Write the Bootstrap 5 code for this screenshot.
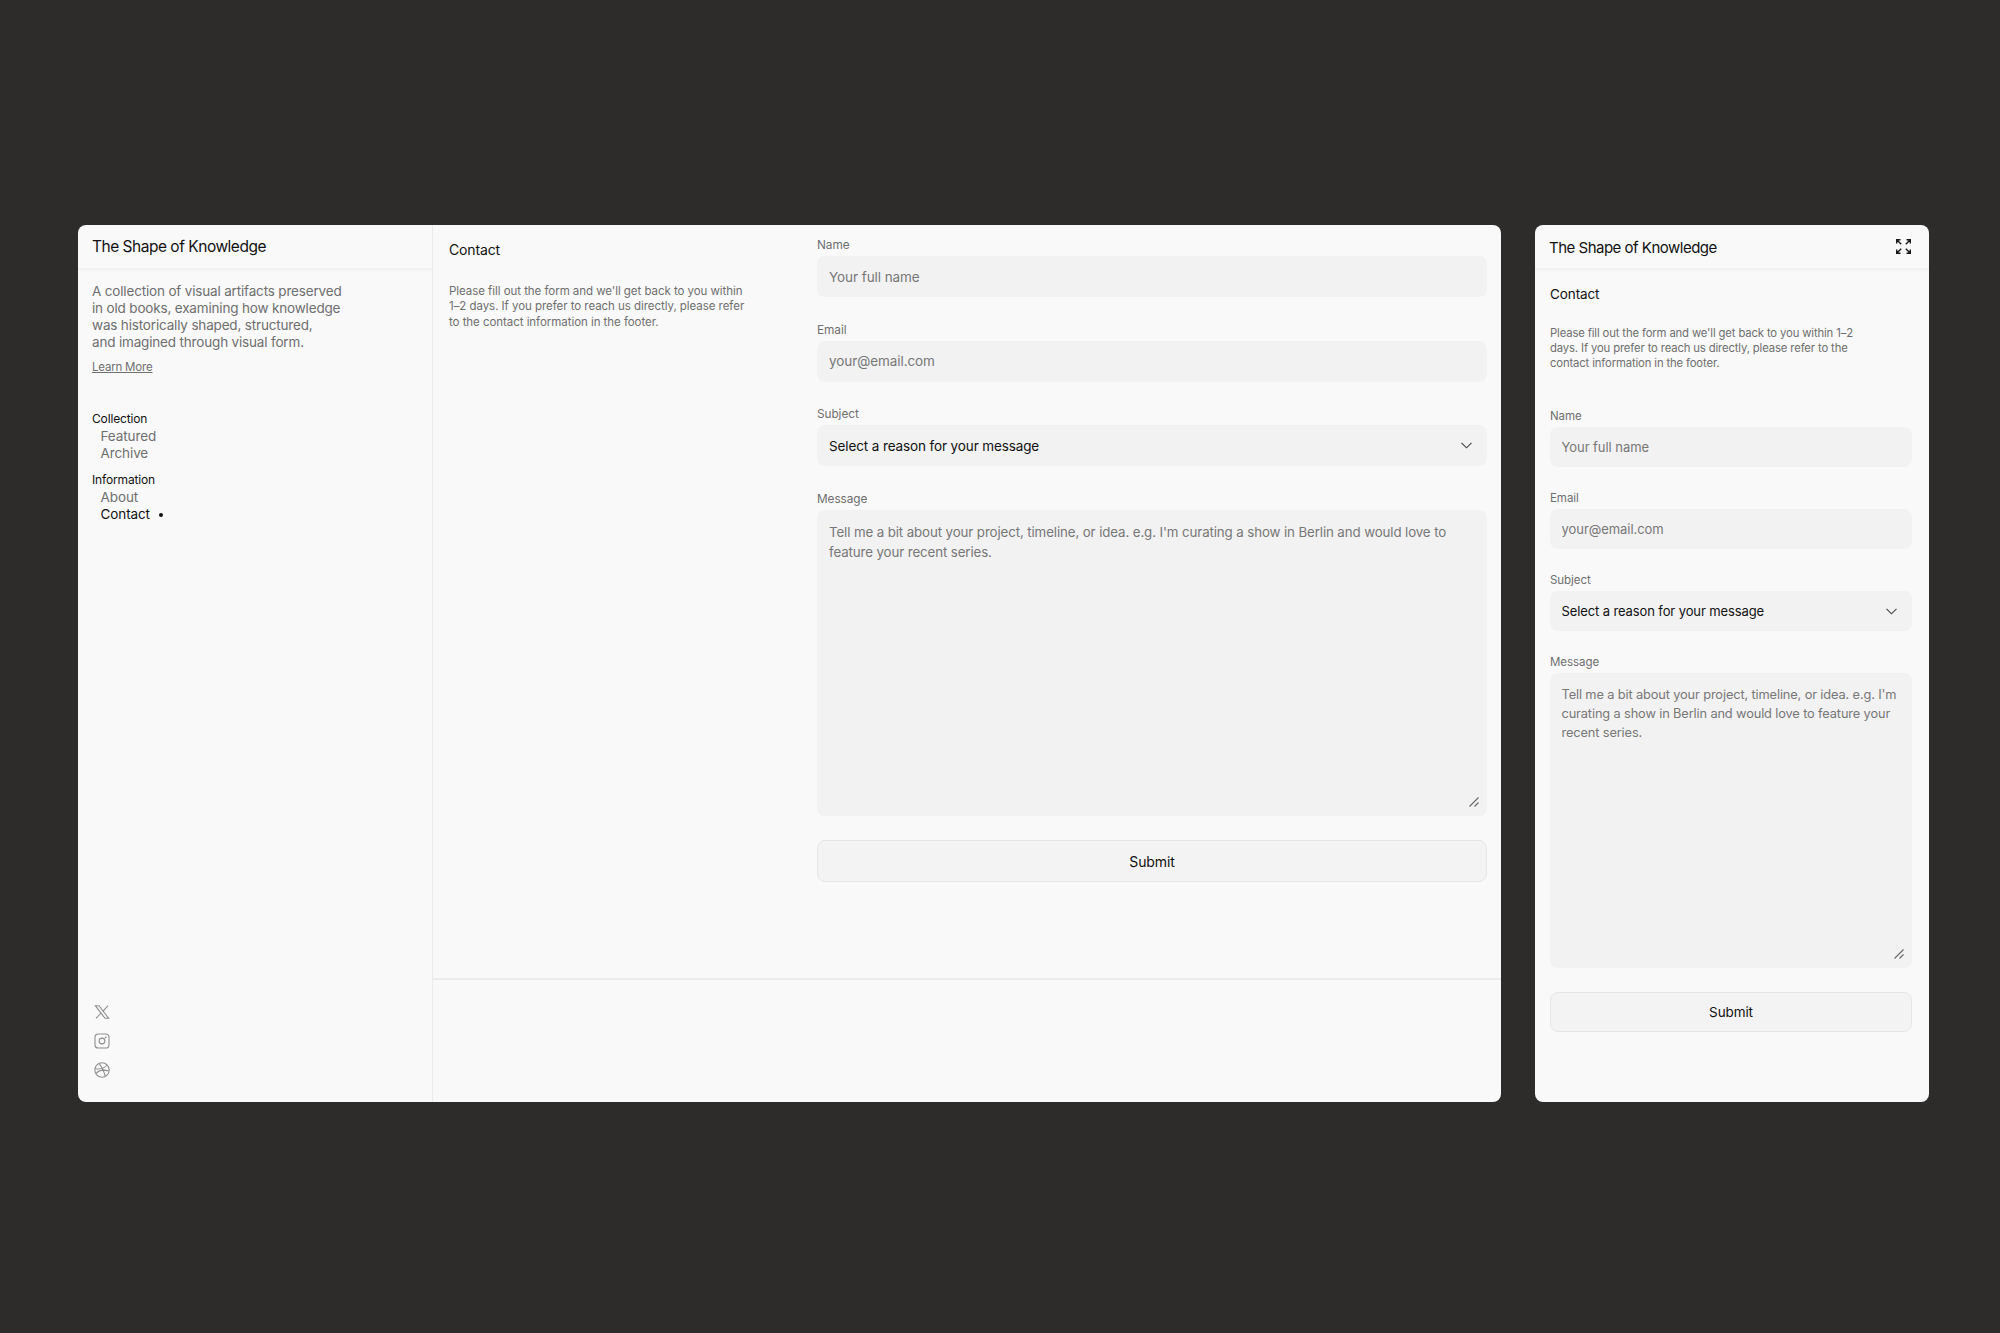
<!DOCTYPE html>
<html lang="en">
<head>
<meta charset="utf-8">
<title>The Shape of Knowledge</title>
<link rel="stylesheet" href="https://cdn.jsdelivr.net/npm/bootstrap@5.3.0/dist/css/bootstrap.min.css">
<style>
:root{--ink:#111;--mut:#6f6f6f;--line:#ececec;--fld:#f2f2f2;}
html,body{height:100%;}
body{background:#2d2c2a;font-family:Inter,"Liberation Sans",sans-serif;color:var(--ink);overflow:hidden;}
.stage{padding:225px 71px 0 78px;gap:34px;}
.shell{height:877px;background:#f9f9f9;border-radius:8px;overflow:hidden;}
.wide{width:1423px;}
.narrow{width:394px;}
.side{width:355px;border-right:1px solid var(--line);}
.brand{height:45px;padding:1px 14px 0;font-size:15.5px;letter-spacing:-.49px;border-bottom:2px solid #f1f1f1;line-height:1;}
.intro{padding:12.5px 14px 0;font-size:13.5px;line-height:17px;color:var(--mut);letter-spacing:-.17px;}
.more{display:inline-block;margin-top:9px;font-size:11.5px;line-height:15px;color:var(--mut);letter-spacing:-.2px;}
.navs{margin-top:35px;padding:0 14px;}
.gh{font-size:12px;line-height:17px;letter-spacing:-.15px;color:var(--ink);margin-bottom:1px;}
.gi{display:block;padding-left:8.5px;font-size:13.5px;line-height:17px;color:var(--mut);letter-spacing:-.1px;text-decoration:none;}
.gi.on{color:var(--ink);}
.dotm{display:inline-block;width:4px;height:4px;border-radius:50%;background:var(--ink);margin-left:9px;vertical-align:2px;}
.grp{margin-bottom:9px;}
.socials{padding:0 0 24px 16px;gap:13px;color:#8d8d8d;}
.socials svg{display:block;width:16px;height:16px;}
.mainp{min-width:0;}
.upper{height:755px;border-bottom:2px solid var(--line);padding:12px 14px 0 16px;}
.lede{width:368px;}
.pg{font-size:14px;line-height:20px;letter-spacing:-.15px;margin:3px 0 0;font-weight:400;}
.cop{font-size:11.5px;line-height:15.3px;color:var(--mut);letter-spacing:-.05px;margin:24px 0 0;}
.formw{width:670px;}
.form-label{font-size:11.8px;line-height:15px;color:var(--mut);padding-top:1px;margin:0 0 3px;display:block;letter-spacing:-.05px;}
.form-control,.form-select{background-color:var(--fld);border:0;border-radius:8px;font-size:13.5px;color:var(--ink);height:41px;padding:0 12px;letter-spacing:-.07px;box-shadow:none;}
.form-control::placeholder{color:#777;opacity:1;}
.form-select{font-size:13.5px;padding-top:1px;background-image:url("data:image/svg+xml,%3Csvg xmlns='http://www.w3.org/2000/svg' viewBox='0 0 11 7'%3E%3Cpath d='M.5.8l5 5 5-5' fill='none' stroke='%23444' stroke-width='1.1'/%3E%3C/svg%3E");background-position:right 15px center;background-size:11px 7px;letter-spacing:-.12px;}
textarea.form-control{height:306px;padding:12px 12px;line-height:20px;font-size:13.3px;letter-spacing:-.11px;resize:none;}
.grip{position:absolute;right:8px;bottom:9px;width:10px;height:10px;display:block;}
.fl{margin-bottom:24.5px;}
.send{height:42px;background:#f3f3f3;border:1px solid #e6e6e6;border-radius:8px;font-size:14px;color:var(--ink);letter-spacing:-.1px;padding:0;}
.nhead{height:45px;padding:0 18px 0 14px;border-bottom:2px solid #f1f1f1;font-size:15px;letter-spacing:-.5px;}
.nhead span{padding-top:3px;}
.nbody{padding:14px 17px 0 15px;}
.nbody .pg{margin:0;line-height:20px;font-size:13.5px;letter-spacing:-.1px;}
.nbody .cop{font-size:11.3px;line-height:14.8px;margin:22px 0 0;width:320px;letter-spacing:-.14px;}
.nform{margin-top:38px;}
.nform .form-control,.nform .form-select{height:40px;font-size:13px;letter-spacing:-.05px;padding-left:11.5px;}
.nform .form-select{letter-spacing:-.11px;}
.nform textarea.form-control{height:295px;font-size:12.8px;letter-spacing:-.13px;line-height:19.2px;padding:11.5px 12px 11.5px 11.5px;}
.nform .fl{margin-bottom:23px;}
.nform .form-label{font-size:11.5px;}
.nform .send{height:40px;font-size:13.5px;margin-top:.5px;}
.expand{width:15px;height:15px;display:block;}
</style>
</head>
<body>
<div class="stage d-flex align-items-start">
  <div class="shell wide d-flex">
    <aside class="side d-flex flex-column flex-shrink-0">
      <div class="brand d-flex align-items-center">The Shape of Knowledge</div>
      <div class="intro">A collection of visual artifacts preserved<br>in old books, examining how knowledge<br>was historically shaped, structured,<br>and imagined through visual form.<br><a class="more" href="#">Learn More</a></div>
      <nav class="navs">
        <div class="grp"><div class="gh">Collection</div><a class="gi" href="#">Featured</a><a class="gi" href="#">Archive</a></div>
        <div class="grp"><div class="gh">Information</div><a class="gi" href="#">About</a><a class="gi on" href="#">Contact<span class="dotm"></span></a></div>
      </nav>
      <div class="socials d-flex flex-column mt-auto">
        <svg viewBox="0 0 24 24" fill="none" stroke="currentColor" stroke-width="1.6"><path d="M2 2.500h5.500L22 21.500h-5.500zM21 2.500l-7.500 8.500M10.500 13.500 3 21.500"/></svg>
        <svg viewBox="0 0 24 24" fill="none" stroke="currentColor" stroke-width="1.6"><rect x="1.500" y="1.500" width="21" height="21" rx="5"/><circle cx="12" cy="12" r="4.300"/><circle cx="17.500" cy="6.500" r=".6" fill="currentColor"/></svg>
        <svg viewBox="0 0 24 24" fill="none" stroke="currentColor" stroke-width="1.6"><circle cx="12" cy="12" r="10.800"/><path d="M8 2.500c3.500 4.500 7.500 12 9 19M2 10c6 1 13 0 18-5.500M3 17.500C7 12.500 14 11 22 13.500"/></svg>
      </div>
    </aside>
    <main class="mainp flex-grow-1">
      <div class="upper d-flex justify-content-between">
        <div class="lede">
          <h1 class="pg">Contact</h1>
          <p class="cop">Please fill out the form and we'll get back to you within<br>1–2 days. If you prefer to reach us directly, please refer<br>to the contact information in the footer.</p>
        </div>
        <form class="formw">
          <div class="fl"><label class="form-label" for="a1">Name</label><input class="form-control" id="a1" placeholder="Your full name"></div>
          <div class="fl"><label class="form-label" for="a2">Email</label><input class="form-control" id="a2" placeholder="your@email.com"></div>
          <div class="fl"><label class="form-label" for="a3">Subject</label><select class="form-select" id="a3"><option>Select a reason for your message</option></select></div>
          <div class="fl"><label class="form-label" for="a4">Message</label><div class="position-relative"><textarea class="form-control" id="a4" placeholder="Tell me a bit about your project, timeline, or idea. e.g. I'm curating a show in Berlin and would love to feature your recent series."></textarea><svg class="grip" viewBox="0 0 10 10" fill="none" stroke="#666" stroke-width="1.100"><path d="M.5 9.500l9-9M5.500 9.500l4-4"/></svg></div></div>
          <button type="button" class="btn send w-100">Submit</button>
        </form>
      </div>
    </main>
  </div>
  <div class="shell narrow d-flex flex-column">
    <div class="nhead d-flex align-items-center justify-content-between">
      <span>The Shape of Knowledge</span>
      <svg class="expand" viewBox="0 0 15 15" fill="none" stroke="#1a1a1a" stroke-width="1.400"><path d="M.7 4.500V.7h3.800M.7.7l4.500 4.500M10.500.7h3.800v3.800M14.300.7 9.800 5.200M.7 10.500v3.800h3.800M.7 14.300l4.500-4.500M10.500 14.300h3.800v-3.800M14.300 14.300 9.800 9.800"/></svg>
    </div>
    <div class="nbody">
      <h2 class="pg">Contact</h2>
      <p class="cop">Please fill out the form and we'll get back to you within 1–2 days. If you prefer to reach us directly, please refer to the contact information in the footer.</p>
      <form class="nform">
        <div class="fl"><label class="form-label" for="b1">Name</label><input class="form-control" id="b1" placeholder="Your full name"></div>
        <div class="fl"><label class="form-label" for="b2">Email</label><input class="form-control" id="b2" placeholder="your@email.com"></div>
        <div class="fl"><label class="form-label" for="b3">Subject</label><select class="form-select" id="b3"><option>Select a reason for your message</option></select></div>
        <div class="fl"><label class="form-label" for="b4">Message</label><div class="position-relative"><textarea class="form-control" id="b4" placeholder="Tell me a bit about your project, timeline, or idea. e.g. I'm curating a show in Berlin and would love to feature your recent series."></textarea><svg class="grip" viewBox="0 0 10 10" fill="none" stroke="#666" stroke-width="1.100"><path d="M.5 9.500l9-9M5.500 9.500l4-4"/></svg></div></div>
        <button type="button" class="btn send w-100">Submit</button>
      </form>
    </div>
  </div>
</div>
<script src="https://cdn.jsdelivr.net/npm/bootstrap@5.3.0/dist/js/bootstrap.bundle.min.js"></script>
</body>
</html>
